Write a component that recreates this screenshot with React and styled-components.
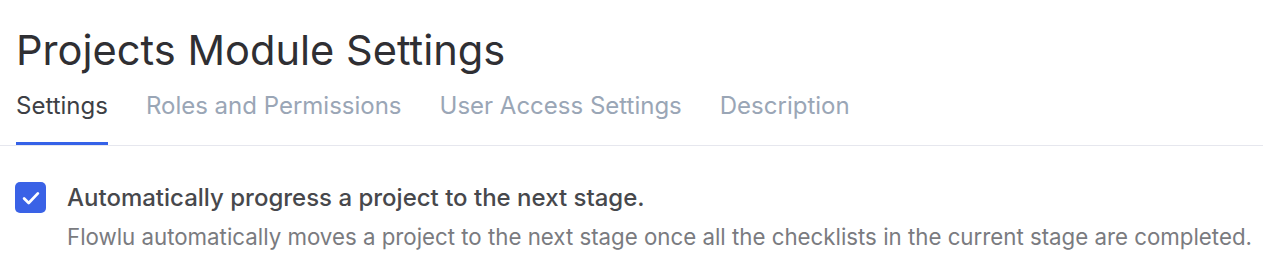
import React from "react";
import styled, { createGlobalStyle } from "styled-components";

const Global = createGlobalStyle`
  html, body { margin: 0; padding: 0; background: #fff; }
  body { font-family: Inter, "Noto Sans", sans-serif; }
`;

const Page = styled.div`
  padding: 25px 0 0 0;
`;

const Title = styled.h1`
  margin: 0 0 0 16px;
  font-size: 41.6px;
  font-weight: 400;
  line-height: 50px;
  color: #2f2f33;
`;

const Tabs = styled.div`
  display: flex;
  gap: 38px;
  padding: 0 16px;
  border-bottom: 1px solid #e6e7ee;
`;

const Tab = styled.div`
  font-size: 24px;
  line-height: 30px;
  padding: 16px 0 21px;
  color: ${(p) => (p.$active ? "#3d3f45" : "#9aa6b6")};
  border-bottom: 3px solid ${(p) => (p.$active ? "#3562e8" : "transparent")};
`;

const Option = styled.div`
  display: flex;
  gap: 21px;
  padding: 36px 0 0 15px;
`;

const Check = styled.div`
  width: 31px;
  height: 31px;
  border-radius: 5px;
  background: #3a62e6;
  display: flex;
  align-items: center;
  justify-content: center;
  flex-shrink: 0;
`;

const Texts = styled.div`
  display: flex;
  flex-direction: column;
  gap: 11px;
  min-width: 0;
`;

const Label = styled.div`
  font-size: 24px;
  font-weight: 500;
  color: #47484c;
  line-height: 31px;
`;

const Desc = styled.div`
  font-size: 22.27px;
  color: #7a7b80;
  line-height: 26px;
  white-space: nowrap;
`;

export default function App() {
  return (
    <Page>
      <Global />
      <Title>Projects Module Settings</Title>
      <Tabs>
        <Tab $active>Settings</Tab>
        <Tab>Roles and Permissions</Tab>
        <Tab>User Access Settings</Tab>
        <Tab>Description</Tab>
      </Tabs>
      <Option>
        <Check>
          <svg width="22" height="22" viewBox="0 0 24 24" fill="none" stroke="#fff" strokeWidth="3" strokeLinecap="round" strokeLinejoin="round">
            <path d="M4.5 12.5l5 5L19.5 7" />
          </svg>
        </Check>
        <Texts>
          <Label>Automatically progress a project to the next stage.</Label>
          <Desc>Flowlu automatically moves a project to the next stage once all the checklists in the current stage are completed.</Desc>
        </Texts>
      </Option>
    </Page>
  );
}
